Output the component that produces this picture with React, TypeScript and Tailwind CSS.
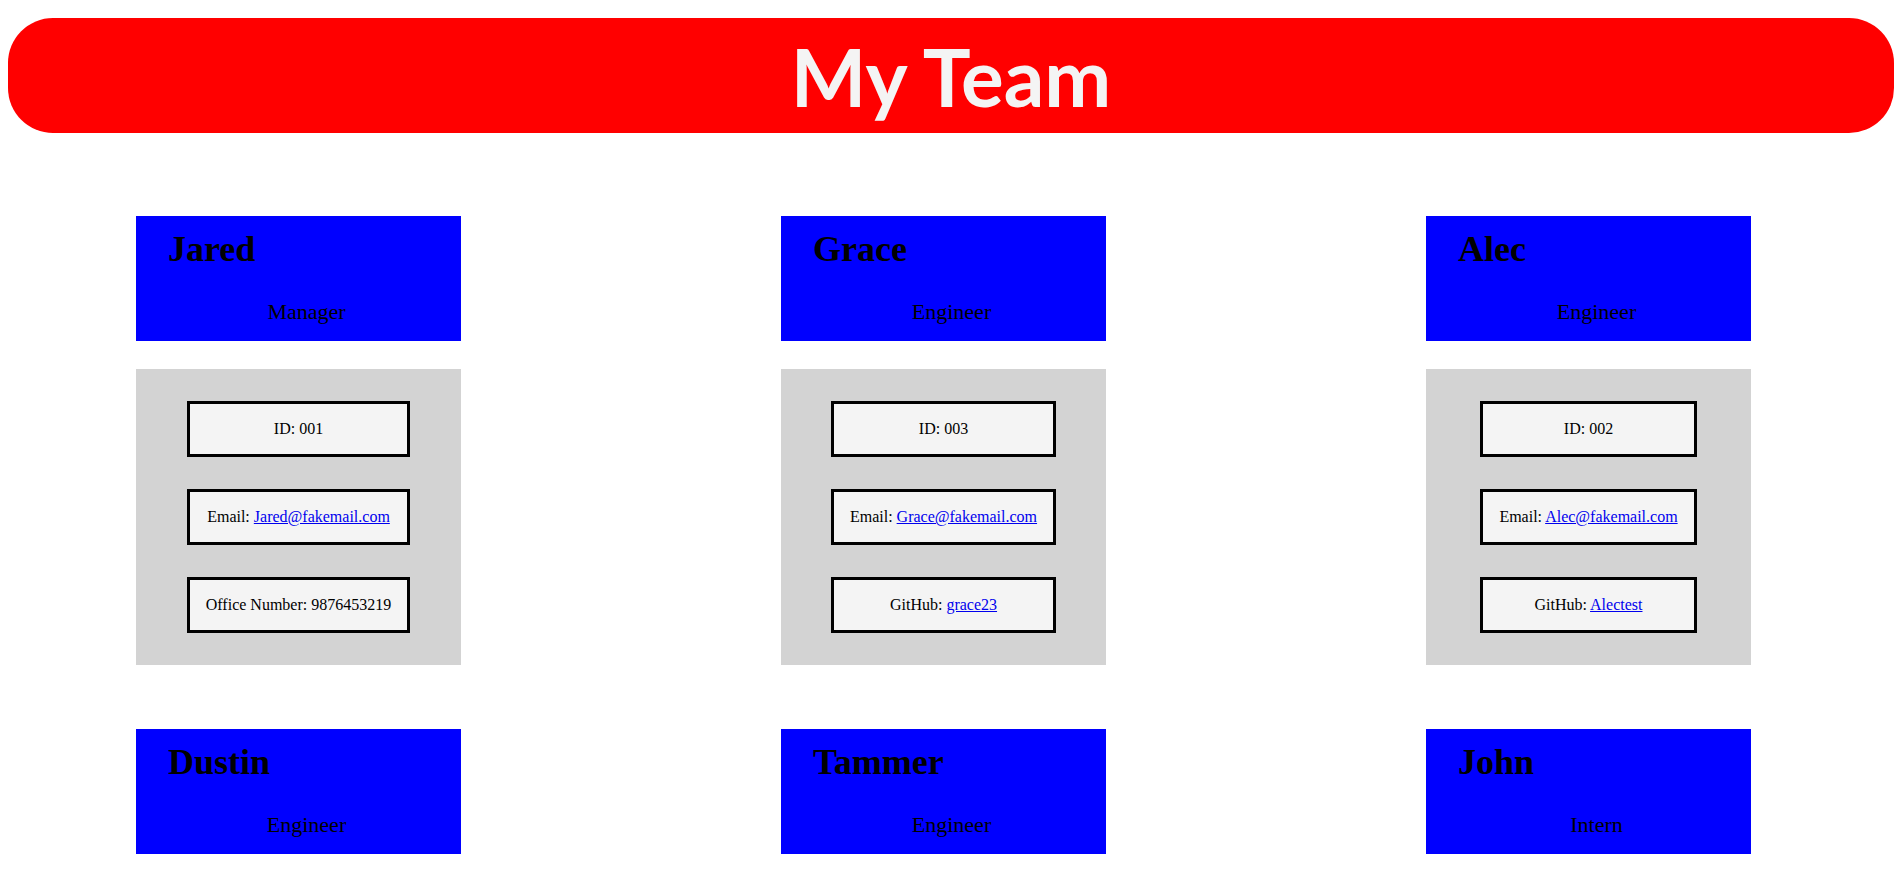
type Member = {
  name: string;
  role: string;
  id: string;
  email: string;
  extraLabel: string;
  extra: string;
  extraLink?: boolean;
};

const TEAM: Member[] = [
  { name: "Jared", role: "Manager", id: "001", email: "Jared@fakemail.com", extraLabel: "Office Number", extra: "9876453219" },
  { name: "Grace", role: "Engineer", id: "003", email: "Grace@fakemail.com", extraLabel: "GitHub", extra: "grace23", extraLink: true },
  { name: "Alec", role: "Engineer", id: "002", email: "Alec@fakemail.com", extraLabel: "GitHub", extra: "Alectest", extraLink: true },
  { name: "Dustin", role: "Engineer", id: "004", email: "Dustin@fakemail.com", extraLabel: "GitHub", extra: "dustin88", extraLink: true },
  { name: "Tammer", role: "Engineer", id: "005", email: "Tammer@fakemail.com", extraLabel: "GitHub", extra: "tammer4", extraLink: true },
  { name: "John", role: "Intern", id: "006", email: "John@fakemail.com", extraLabel: "School", extra: "UCLA" },
];

const InfoBox = ({ children }: { children: React.ReactNode }) => (
  <div className="border-[3px] border-black bg-[#f4f4f4] p-4 text-center text-[16px] leading-[18px] text-black">
    {children}
  </div>
);

const Card = ({ m }: { m: Member }) => (
  <div className="flex w-[325px] flex-col">
    <div className="h-[125px] bg-[#0000ff] text-black">
      <h2 className="pl-8 pt-[15px] text-[36px] font-bold leading-none">{m.name}</h2>
      <p className="mt-[34px] pl-4 text-center text-[22px] leading-none">{m.role}</p>
    </div>
    <div className="mt-[28px] bg-[#d3d3d3] py-8">
      <div className="mx-auto flex w-fit flex-col gap-8">
        <InfoBox>ID: {m.id}</InfoBox>
        <InfoBox>
          Email:{" "}
          <a href={`mailto:${m.email}`} className="text-[#0000ee] underline">
            {m.email}
          </a>
        </InfoBox>
        <InfoBox>
          {m.extraLabel}:{" "}
          {m.extraLink ? (
            <a href="#" className="text-[#0000ee] underline">
              {m.extra}
            </a>
          ) : (
            m.extra
          )}
        </InfoBox>
      </div>
    </div>
  </div>
);

export default function App() {
  return (
    <div className="min-h-screen bg-white pt-[18px] font-['Liberation_Serif',serif]">
      <header className="ml-2 mr-[6px] flex h-[115px] items-center justify-center rounded-[45px] bg-[#ff0000]">
        <h1 className="font-['Lato',sans-serif] text-[80px] font-bold leading-none text-[#f4f4f4]">My Team</h1>
      </header>

      <main className="mt-[83px] grid grid-cols-[325px_325px_325px] gap-x-[320px] gap-y-[64px] pb-16 pl-[136px]">
        {TEAM.map((m) => (
          <Card key={m.name} m={m} />
        ))}
      </main>
    </div>
  );
}
